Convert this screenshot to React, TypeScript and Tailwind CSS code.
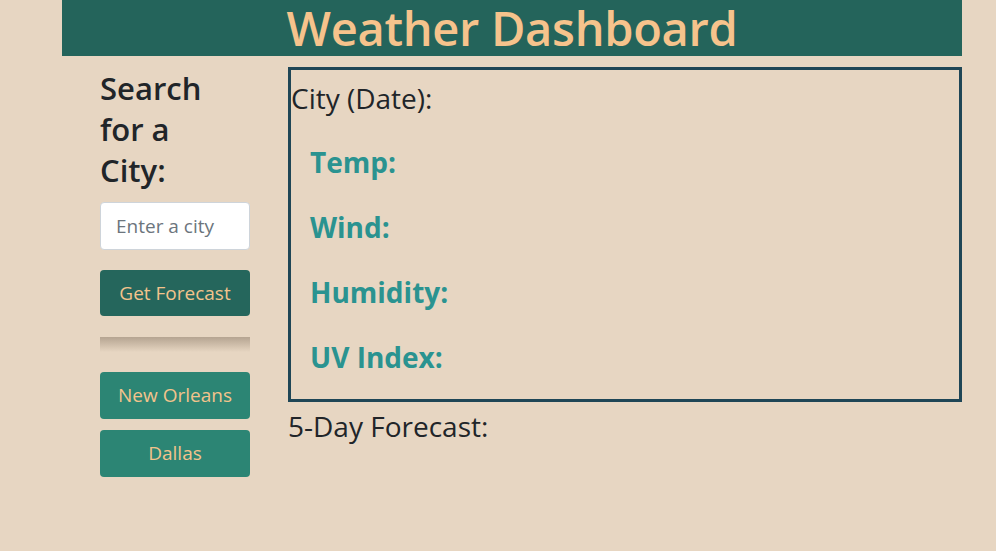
import React from "react";

export default function App() {
  const font = { fontFamily: '"Open Sans", "Noto Sans", sans-serif' };
  return (
    <div className="min-h-[551px] w-full bg-[#e7d6c2] text-[#212529]" style={font}>
      <div className="ml-[62px] w-[900px]">
        <header className="h-[56px] bg-[#24645b] flex items-center justify-center">
          <h1 className="text-[47px] leading-[52px] font-semibold text-[#f6c38c] tracking-[-0.3px]">Weather Dashboard</h1>
        </header>
        <div className="flex">
          <aside className="w-[226px] pl-[38px] pr-[38px] pt-[12px]">
            <h2 className="w-[130px] text-[31px] leading-[41px] font-semibold text-[#212529]">Search for a City:</h2>
            <input
              className="mt-[11px] w-[150px] h-[48px] bg-white border border-[#ced4da] rounded-[4px] px-[15px] text-[19px] placeholder:text-[#6c757d] outline-none"
              placeholder="Enter a city"
            />
            <button className="mt-[20px] w-[150px] h-[46px] rounded-[4px] bg-[#25665c] text-[#f3c38c] text-[19px] block">Get Forecast</button>
            <div className="mt-[21px] h-[15px] w-[150px] bg-gradient-to-b from-[#b5a491] to-[#e7d6c2]" />
            <button className="mt-[20px] w-[150px] h-[47px] rounded-[4px] bg-[#2c8574] text-[#f3c38c] text-[19px] block">New Orleans</button>
            <button className="mt-[11px] w-[150px] h-[47px] rounded-[4px] bg-[#2c8574] text-[#f3c38c] text-[19px] block">Dallas</button>
          </aside>
          <main className="flex-1 pt-[11px]">
            <section className="h-[335px] border-[3px] border-[#1f4656]">
              <h3 className="text-[28px] leading-[60px] -mt-[2px]">City (Date):</h3>
              <ul className="pl-[19px] mt-[1px]">
                <li className="h-[65px] flex items-center text-[28px] font-bold text-[#2a9390]">Temp:</li>
                <li className="h-[65px] flex items-center text-[28px] font-bold text-[#2a9390]">Wind:</li>
                <li className="h-[65px] flex items-center text-[28px] font-bold text-[#2a9390]">Humidity:</li>
                <li className="h-[65px] flex items-center text-[28px] font-bold text-[#2a9390]">UV Index:</li>
              </ul>
            </section>
            <h3 className="text-[28px] leading-[48px]">5-Day Forecast:</h3>
          </main>
        </div>
      </div>
    </div>
  );
}
